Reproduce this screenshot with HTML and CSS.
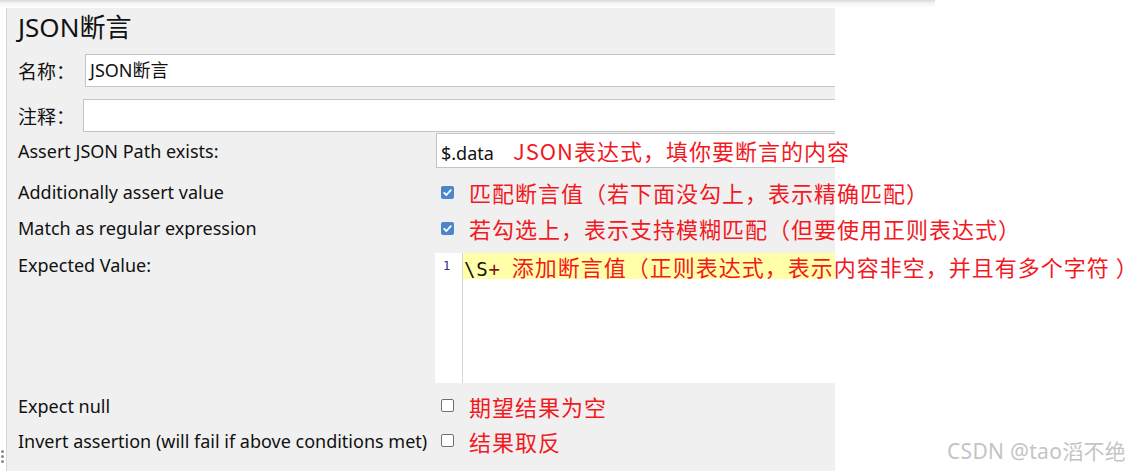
FILE: index.html
```html
<!DOCTYPE html>
<html lang="zh-CN">
<head>
  <meta charset="UTF-8">
  <title>JSON断言</title>
  <link rel="stylesheet" href="styles.css">
</head>
<body>
  <div class="topbar"></div>

  <div class="main">
    <!-- left splitter with drag handle -->
    <div class="splitter">
      <span class="dot"></span>
      <span class="dot"></span>
      <span class="dot"></span>
    </div>

    <section class="panel">
      <h2 class="title">JSON断言</h2>

      <div class="row name-row">
        <label class="short-label">名称：</label>
        <div class="field">JSON断言</div>
      </div>
      <div class="row comment-row">
        <label class="short-label narrow">注释：</label>
        <div class="field"></div>
      </div>

      <!-- assertion settings -->
      <div class="grid-row assert-row">
        <label class="label">Assert JSON Path exists:</label>
        <div class="field path-field">$.data<span class="note path-note">JSON表达式，填你要断言的内容</span></div>
      </div>
      <div class="grid-row check-row first-check">
        <label class="label">Additionally assert value</label>
        <div class="value"><span class="box checked"></span><span class="note">匹配断言值（若下面没勾上，表示精确匹配）</span></div>
      </div>
      <div class="grid-row check-row">
        <label class="label">Match as regular expression</label>
        <div class="value"><span class="box checked"></span><span class="note">若勾选上，表示支持模糊匹配（但要使用正则表达式）</span></div>
      </div>
      <div class="grid-row editor-row">
        <label class="label">Expected Value:</label>
        <div class="editor">
          <div class="line-numbers">1</div>
          <div class="code">
            <div class="code-line">\S<span class="op">+</span><span class="note code-note">添加断言值（正则表达式，表示内容非空，并且有多个字符 ）</span></div>
          </div>
        </div>
      </div>
      <div class="grid-row check-row null-row">
        <label class="label">Expect null</label>
        <div class="value"><span class="box"></span><span class="note">期望结果为空</span></div>
      </div>
      <div class="grid-row check-row">
        <label class="label">Invert assertion (will fail if above conditions met)</label>
        <div class="value"><span class="box"></span><span class="note">结果取反</span></div>
      </div>
    </section>
  </div>

  <div class="watermark">CSDN @tao滔不绝</div>
</body>
</html>
```

FILE: styles.css
```css
body {
  margin: 0;
  background: #fff;
  font-family: "Noto Sans", "Noto Sans CJK SC", sans-serif;
  color: #111;
  width: 1128px;
  height: 471px;
  overflow: hidden;
  position: relative;
}
.topbar {
  height: 8px;
  width: 935px;
  background: linear-gradient(#d9d9d9, #f4f4f4 40%, #fff);
}
.main {
  display: flex;
  height: 463px;
}
.splitter {
  width: 7px;
  border-right: 1px solid #d6d6d6;
  display: flex;
  flex-direction: column;
  justify-content: flex-end;
  align-items: flex-start;
  gap: 2px;
  padding-bottom: 8px;
  box-sizing: border-box;
}
.dot {
  width: 3px;
  height: 3px;
  margin-left: 1px;
  border-radius: 50%;
  background: #8a8a8a;
}
.panel {
  width: 828px;
  background: #f0f0f0;
  padding-left: 11px;
  box-sizing: border-box;
}
.title {
  margin: 0;
  height: 38px;
  line-height: 38px;
  font-size: 26px;
  font-weight: normal;
  color: #111;
}

/* name / comment rows */
.row {
  display: flex;
  align-items: center;
}
.name-row {
  margin-top: 8px;
}
.comment-row {
  margin-top: 12px;
}
.short-label {
  width: 67px;
  font-size: 19px;
}
.short-label.narrow {
  width: 65px;
}
.field {
  flex: 1;
  min-width: 0;
  height: 33px;
  box-sizing: border-box;
  border: 1px solid #c4c4c4;
  border-right: none;
  background: #fff;
  font-size: 18px;
  line-height: 31px;
  padding-left: 4px;
  white-space: nowrap;
}

/* label / value grid */
.grid-row {
  display: grid;
  grid-template-columns: 417px minmax(0, 1fr);
  align-items: center;
}
.label {
  font-size: 18px;
  white-space: nowrap;
}
.assert-row {
  margin-top: 1px;
  height: 35px;
}
.path-field {
  height: 35px;
  line-height: 33px;
  margin-left: 1px;
}
.note {
  color: #f2191f;
  font-family: "Noto Sans CJK SC", sans-serif;
  font-size: 22px;
  letter-spacing: 1px;
  white-space: nowrap;
}
.path-note {
  margin-left: 19px;
}
.check-row {
  height: 36px;
}
.first-check {
  margin-top: 6px;
}
.value {
  display: flex;
  align-items: center;
  white-space: nowrap;
}
.box {
  flex: none;
  width: 13px;
  height: 13px;
  margin-left: 6px;
  margin-right: 15px;
  border-radius: 2px;
  box-sizing: border-box;
  border: 1px solid #6f6f6f;
  background: #fff;
}
.box.checked {
  border: none;
  background: #4a86c8 url("data:image/svg+xml,%3Csvg xmlns='http://www.w3.org/2000/svg' viewBox='0 0 13 13'%3E%3Cpath d='M3.2 6.8l2.2 2.2 4.4-4.8' fill='none' stroke='%23fff' stroke-width='1.8' stroke-linecap='round' stroke-linejoin='round'/%3E%3C/svg%3E") no-repeat center;
}

/* expected value editor */
.editor-row {
  margin-top: 7px;
  align-items: start;
}
.editor-row .label {
  line-height: 24px;
}
.editor {
  display: flex;
  height: 130px;
  background: #fff;
}
.line-numbers {
  flex: none;
  width: 28px;
  box-sizing: border-box;
  border-right: 1px solid #d6d6d6;
  font-family: "DejaVu Sans Mono", monospace;
  font-size: 12px;
  color: #2b2b8c;
  text-align: center;
  line-height: 26px;
  padding-right: 4px;
}
.code {
  flex: 1;
  min-width: 0;
}
.code-line {
  height: 26px;
  line-height: 26px;
  background: #ffffaa;
  font-family: "DejaVu Sans Mono", monospace;
  font-size: 19px;
  letter-spacing: 0.8px;
  padding-left: 1px;
  white-space: nowrap;
}
.op {
  color: #7a1a1a;
}
.code-note {
  margin-left: 11px;
}
.null-row {
  margin-top: 5px;
  height: 35px;
}
.null-row + .check-row {
  height: 35px;
}

.watermark {
  position: absolute;
  left: 947px;
  top: 435px;
  font-family: "Noto Sans", "Noto Sans CJK SC", sans-serif;
  font-size: 21px;
  letter-spacing: 0.3px;
  color: #c4c4c4;
  text-shadow: 0 0 1px #fff;
  white-space: nowrap;
}
```
